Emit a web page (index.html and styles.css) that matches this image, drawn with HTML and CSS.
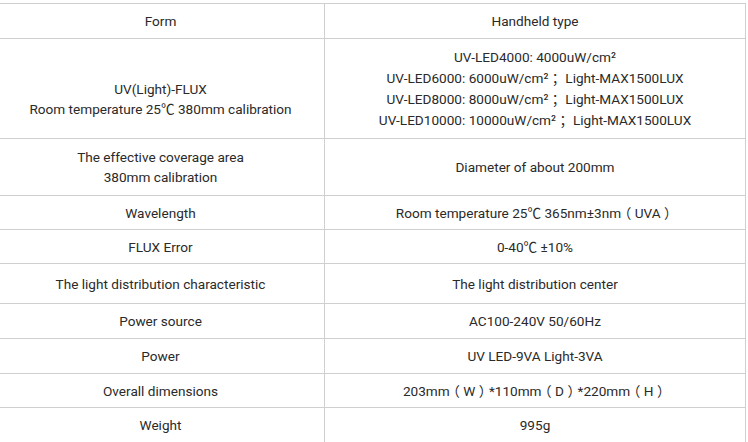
FILE: index.html
```html
<!DOCTYPE html>
<html>
<head>
<meta charset="utf-8">
<link rel="stylesheet" href="styles.css">
</head>
<body>
<table class="spec">
  <colgroup><col class="c1"><col class="c2"></colgroup>
  <tr class="h35"><td>Form</td><td>Handheld type</td></tr>
  <tr class="h100"><td><br>UV(Light)-FLUX<br>Room temperature 25℃ 380mm calibration</td><td>UV-LED4000: 4000uW/cm²<br>UV-LED6000: 6000uW/cm²<span class="fw">；</span>&nbsp;Light-MAX1500LUX<br>UV-LED8000: 8000uW/cm²<span class="fw">；</span>&nbsp;Light-MAX1500LUX<br>UV-LED10000: 10000uW/cm²<span class="fw">；</span>&nbsp;Light-MAX1500LUX</td></tr>
  <tr class="h57"><td>The effective coverage area<br>380mm calibration</td><td>Diameter of about 200mm</td></tr>
  <tr class="h34"><td>Wavelength</td><td>Room temperature 25℃ 365nm±3nm<span class="fw">（</span>UVA<span class="fw">）</span></td></tr>
  <tr class="h34"><td>FLUX Error</td><td>0-40℃ ±10%</td></tr>
  <tr class="h40"><td>The light distribution characteristic</td><td>The light distribution center</td></tr>
  <tr class="h35"><td>Power source</td><td>AC100-240V 50/60Hz</td></tr>
  <tr class="h35"><td>Power</td><td>UV LED-9VA Light-3VA</td></tr>
  <tr class="h34"><td>Overall dimensions</td><td>203mm<span class="fw">（</span>W<span class="fw">）</span>*110mm<span class="fw">（</span>D<span class="fw">）</span>*220mm<span class="fw">（</span>H<span class="fw">）</span></td></tr>
  <tr class="h35"><td>Weight</td><td>995g</td></tr>
</table>
</body>
</html>
```
FILE: styles.css
```css
html, body {
  margin: 0;
  padding: 0;
  background: #fff;
}
.spec {
  margin: 3px 0 0 -4px;
  width: 750px;
  border-collapse: collapse;
  table-layout: fixed;
  font-family: Roboto, "Noto Sans CJK SC", sans-serif;
  font-size: 13.6px;
  line-height: 20px;
  color: #2a2a2a;
}
.c1 { width: 328px; }
.spec td {
  border: 1px solid #cfcfcf;
  text-align: center;
  vertical-align: middle;
  padding: 0;
}
.fw {
  font-family: "Noto Sans CJK SC", sans-serif;
  font-feature-settings: "halt" 1;
  padding: 0 0.25em;
}
.h34 { height: 34px; }
.h35 { height: 35px; }
.h40 { height: 40px; }
.h57 { height: 57px; }
.h100 { height: 100px; }
```
